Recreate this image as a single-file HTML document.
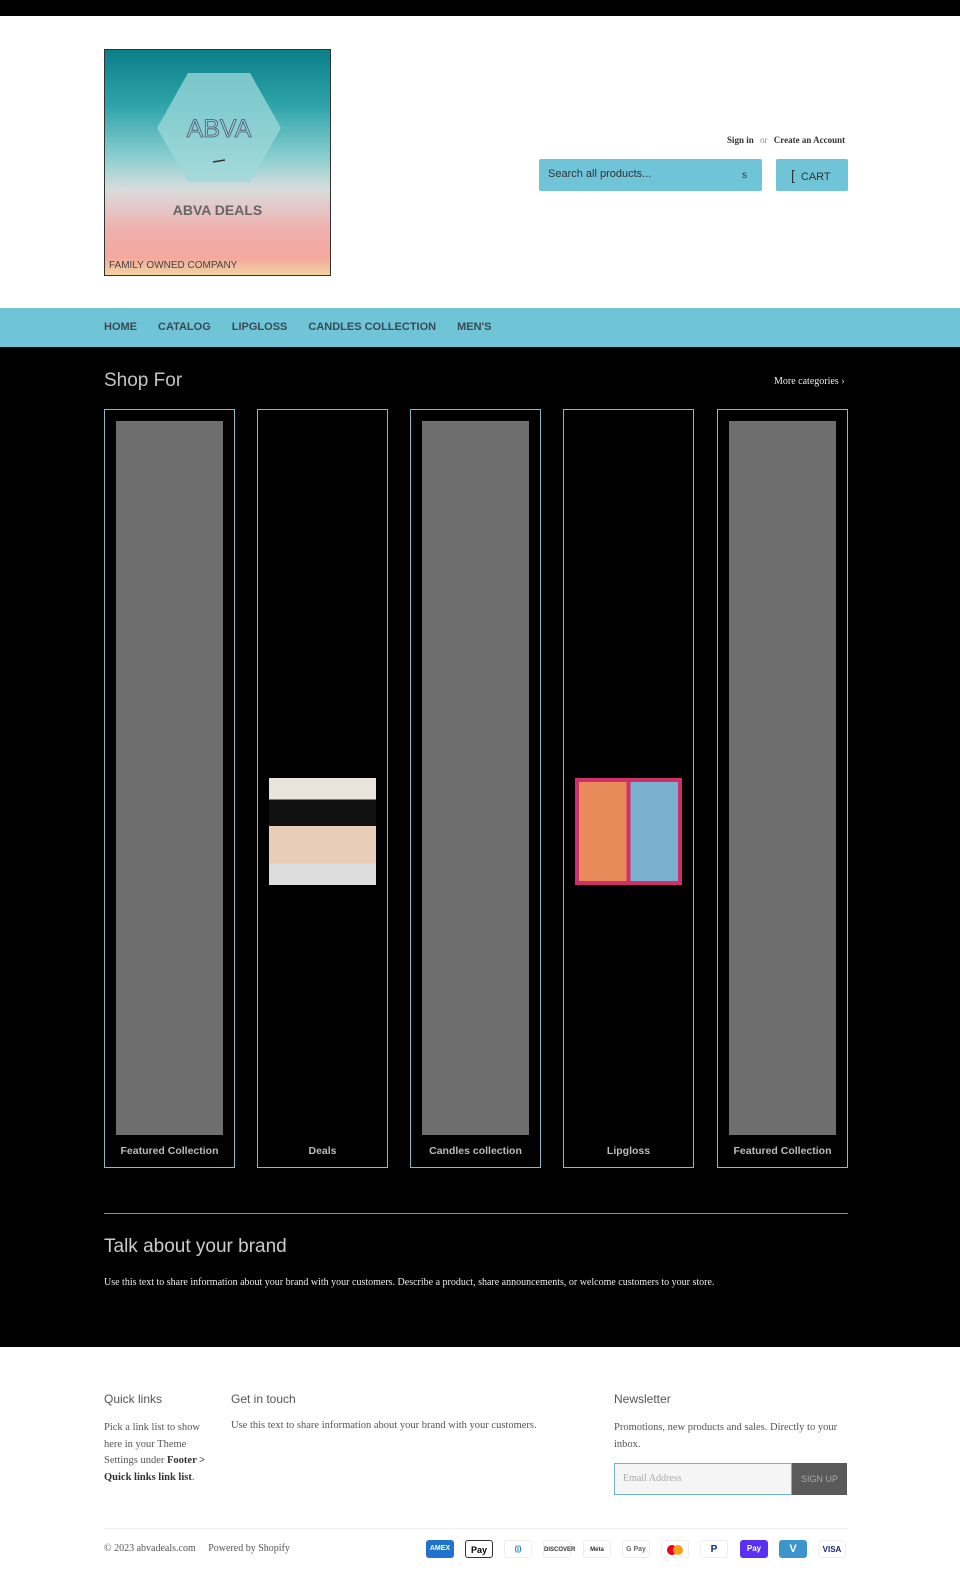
<!DOCTYPE html>
<html><head><meta charset="utf-8"><style>
*{margin:0;padding:0;box-sizing:border-box}
body{width:960px;height:1581px;background:#fff;font-family:"Liberation Sans",sans-serif;position:relative;overflow:hidden}
.a{position:absolute}
.serif{font-family:"Liberation Serif",serif}
.card{position:absolute;top:409px;width:131px;height:759px;border:1px solid #8db6c6;background:#000}
.card .g{position:absolute;left:11px;top:11px;width:107px;height:714px;background:#6e6e6e}
.card .l{position:absolute;left:0;right:0;top:735px;text-align:center;color:#bbb;font-size:10.5px;font-weight:bold}
.nav span{margin-right:21px}
.pay{position:absolute;top:1540px;width:28px;height:18px;border-radius:3px;font-size:7px;font-weight:bold;text-align:center;line-height:18px}
</style></head><body>
<div class="a" style="left:0;top:0;width:960px;height:16px;background:#000"></div>
<div class="a" style="left:104px;top:49px;width:227px;height:227px;background:linear-gradient(#0b7f88 0%,#2fa4aa 25%,#8ccfd0 48%,#d8dcdc 62%,#f0b0ae 80%,#f4a89e 92%,#f2d2a0 100%);border:1px solid #333">
 <svg class="a" style="left:52px;top:23px" width="124" height="110"><polygon points="31,0 93,0 124,55 93,109 31,109 0,55" fill="#9fd8da" opacity=".75"/><text x="62" y="64" text-anchor="middle" font-family="Liberation Sans" font-size="25" fill="none" stroke="#557" stroke-width=".8">ABVA</text><path d="M56 89l12-2" stroke="#333" stroke-width="1.5"/></svg>
 <div class="a" style="left:0;right:0;top:152px;text-align:center;font-weight:bold;font-size:14px;color:#666">ABVA DEALS</div>
 <div class="a" style="left:4px;top:210px;font-size:10px;color:#444">FAMILY OWNED COMPANY</div>
</div>
<div class="a serif" style="left:727px;top:135px;font-size:9px;color:#333;font-weight:bold">Sign in <span style="font-weight:normal;color:#888;margin:0 4px">or</span> Create an Account</div>
<div class="a" style="left:539px;top:159px;width:223px;height:32px;background:#6fc4d8;border-radius:2px;font-size:11px;color:#333;padding:9px 0 0 9px">Search all products...<span class="a" style="left:203px;top:11px;font-size:10px">s</span></div>
<div class="a" style="left:776px;top:159px;width:72px;height:32px;background:#6fc4d8;border-radius:2px;font-size:11px;color:#333;padding:8px 0 0 15px"><span style="font-size:14px;margin-right:6px">[</span>CART</div>
<div class="a nav" style="left:0;top:308px;width:960px;height:39px;background:#6fc4d8;padding:13px 0 0 104px;font-size:11px;font-weight:bold;color:#3a4a50">
<span>HOME</span><span>CATALOG</span><span>LIPGLOSS</span><span>CANDLES COLLECTION</span><span>MEN'S</span></div>
<div class="a" style="left:0;top:347px;width:960px;height:1000px;background:#000"></div>
<div class="a" style="left:104px;top:370px;font-size:19px;color:#c4c4c4">Shop For</div>
<div class="a serif" style="left:774px;top:376px;font-size:10px;color:#eee">More categories ›</div>
<div class="card" style="left:104px"><div class="g"></div><div class="l">Featured Collection</div></div>
<div class="card" style="left:257px"><div class="a" style="left:11px;top:368px;width:107px;height:107px;background:linear-gradient(#e8e4dc 0 20%,#111 20% 45%,#e8cdb8 45% 80%,#ddd 80%)"></div><div class="l">Deals</div></div>
<div class="card" style="left:410px"><div class="g"></div><div class="l">Candles collection</div></div>
<div class="card" style="left:563px"><div class="a" style="left:11px;top:368px;width:107px;height:107px;background:#d0306a"><div style="margin:4px;height:99px;background:linear-gradient(90deg,#e88a5a 0 48%,#d0306a 48% 52%,#7ab0d0 52%)"></div></div><div class="l">Lipgloss</div></div>
<div class="card" style="left:717px"><div class="g"></div><div class="l">Featured Collection</div></div>
<div class="a" style="left:104px;top:1213px;width:744px;height:1px;background:#6a9fb0"></div>
<div class="a" style="left:104px;top:1236px;font-size:19px;color:#ccc">Talk about your brand</div>
<div class="a serif" style="left:104px;top:1277px;font-size:10px;color:#eee">Use this text to share information about your brand with your customers. Describe a product, share announcements, or welcome customers to your store.</div>
<div class="a" style="left:104px;top:1392px;font-size:12px;color:#555">Quick links</div>
<div class="a" style="left:231px;top:1392px;font-size:12px;color:#555">Get in touch</div>
<div class="a" style="left:614px;top:1392px;font-size:12px;color:#555">Newsletter</div>
<div class="a serif" style="left:104px;top:1420px;width:110px;font-size:10.5px;line-height:16.5px;color:#555">Pick a link list to show here in your Theme Settings under <b style="color:#333">Footer &gt; Quick links link list</b>.</div>
<div class="a serif" style="left:231px;top:1420px;font-size:10.5px;color:#555">Use this text to share information about your brand with your customers.</div>
<div class="a serif" style="left:614px;top:1420px;width:240px;font-size:10.5px;line-height:16.5px;color:#555">Promotions, new products and sales. Directly to your inbox.</div>
<div class="a serif" style="left:614px;top:1463px;width:178px;height:32px;border:1px solid #6fb4c4;background:#f5f5f5;font-size:10px;color:#aaa;padding:9px 0 0 8px">Email Address</div>
<div class="a" style="left:792px;top:1463px;width:55px;height:32px;background:#5a5a5a;color:#aaa;font-size:9px;text-align:center;line-height:32px">SIGN UP</div>
<div class="a" style="left:104px;top:1528px;width:744px;height:1px;background:#eee"></div>
<div class="a serif" style="left:104px;top:1543px;font-size:10px;color:#555">© 2023 abvadeals.com &nbsp;&nbsp;&nbsp; Powered by Shopify</div>
<div class="pay" style="left:426px;background:#1f72cd;color:#fff">AMEX</div>
<div class="pay" style="left:465px;border:1px solid #333;color:#000;font-size:9px">Pay</div>
<div class="pay" style="left:504px;border:1px solid #eee;color:#0079be">(|)</div>
<div class="pay" style="left:543px;border:1px solid #eee;color:#333;font-size:6px">DISCOVER</div>
<div class="pay" style="left:583px;border:1px solid #eee;color:#333;font-size:6px">Meta</div>
<div class="pay" style="left:622px;border:1px solid #eee;color:#666">G Pay</div>
<div class="pay" style="left:661px;border:1px solid #eee"><span style="display:inline-block;width:10px;height:10px;border-radius:5px;background:#eb001b;margin-top:4px"></span><span style="display:inline-block;width:10px;height:10px;border-radius:5px;background:#f79e1b;margin-left:-4px"></span></div>
<div class="pay" style="left:700px;border:1px solid #eee;color:#003087;font-size:10px">P</div>
<div class="pay" style="left:740px;background:#5a31f4;color:#fff;font-size:8px">Pay</div>
<div class="pay" style="left:779px;background:#3d95ce;color:#fff;font-size:11px">V</div>
<div class="pay" style="left:818px;border:1px solid #eee;color:#1a1f71;font-size:8px">VISA</div>
</body></html>
